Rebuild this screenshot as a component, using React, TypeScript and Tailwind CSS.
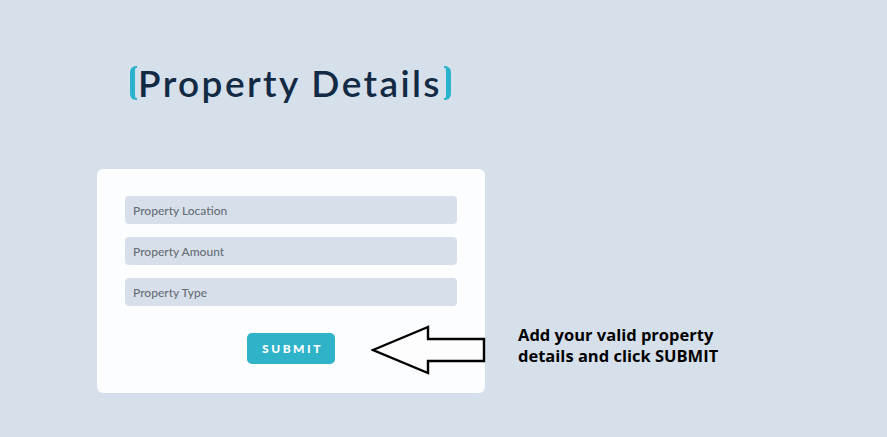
export default function App() {
  return (
    <div className="w-full h-[437px] bg-[#d6e0ea] overflow-hidden font-['Lato',sans-serif]">
      <div className="pt-[66px] pl-[130px]">
        <h1 className="inline-flex items-stretch h-[34px]">
          <span className="w-[7px] border-l-[5px] border-y-[2px] border-[#2bb3cb] rounded-l-[6px]"></span>
          <span className="text-[37px] leading-[34px] tracking-[2.4px] font-semibold text-[#132a45] pl-[1px] pr-[2px]">
            Property Details
          </span>
          <span className="w-[7px] border-r-[5px] border-y-[2px] border-[#2bb3cb] rounded-r-[6px]"></span>
        </h1>
      </div>

      <div className="flex items-start mt-[63px] pl-[97px]">
        <div className="w-[388px] h-[224px] bg-[#fcfdff] rounded-[6px] pt-[27px] px-[28px] flex flex-col">
          <div className="flex flex-col gap-[13px]">
            {["Property Location", "Property Amount", "Property Type"].map((p) => (
              <input
                key={p}
                placeholder={p}
                className="h-[28px] w-full rounded-[4px] bg-[#d7e0ea] pl-[8px] text-[12px] font-medium placeholder:text-[#686e76] outline-none"
              />
            ))}
          </div>
          <button className="self-center mt-[27px] w-[88px] h-[31px] rounded-[5px] bg-[#2eb3c9] text-white text-[12px] font-black tracking-[2.5px] pl-[3px]">
            SUBMIT
          </button>
        </div>

        <div className="flex items-start mt-[156px] ml-[-114px]">
          <svg width="115" height="50" viewBox="0 0 115 50" className="shrink-0">
            <polygon
              points="2,25 57,2 57,14 113,14 113,36 57,36 57,48"
              fill="#fdfdfe"
              stroke="#000"
              strokeWidth="2.4"
              strokeLinejoin="miter"
            />
          </svg>
          <p className="ml-[32px] mt-[-1px] text-[16.5px] leading-[21px] font-bold text-black font-['Open_Sans',sans-serif]">
            Add your valid property
            <br />
            details and click SUBMIT
          </p>
        </div>
      </div>
    </div>
  );
}
